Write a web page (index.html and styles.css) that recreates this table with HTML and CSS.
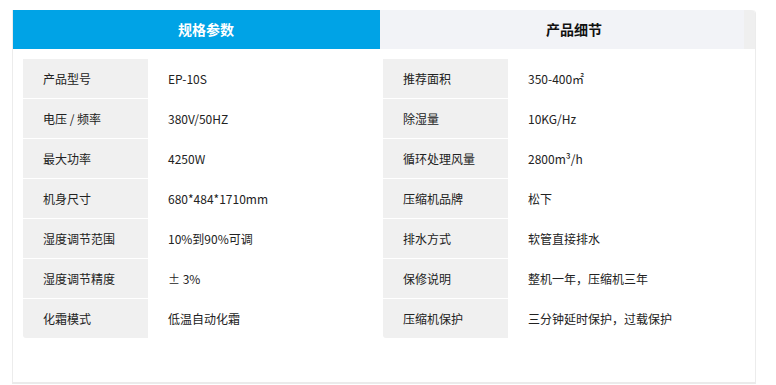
FILE: index.html
```html
<!DOCTYPE html>
<html lang="zh-CN">
<head>
<meta charset="utf-8">
<title>规格参数</title>
<link rel="stylesheet" href="styles.css">
</head>
<body>
<div class="page">
  <div class="card">
    <div class="tabs">
      <div class="tab tab-active">规格参数</div>
      <div class="tab tab-idle">产品细节</div>
    </div>
    <div class="tables">
      <div class="spec">
        <div class="row"><div class="k">产品型号</div><div class="v">EP-10S</div></div>
        <div class="row"><div class="k">电压 / 频率</div><div class="v">380V/50HZ</div></div>
        <div class="row"><div class="k">最大功率</div><div class="v">4250W</div></div>
        <div class="row"><div class="k">机身尺寸</div><div class="v">680*484*1710mm</div></div>
        <div class="row"><div class="k">湿度调节范围</div><div class="v">10%到90%可调</div></div>
        <div class="row"><div class="k">湿度调节精度</div><div class="v">± 3%</div></div>
        <div class="row"><div class="k">化霜模式</div><div class="v">低温自动化霜</div></div>
      </div>
      <div class="spec">
        <div class="row"><div class="k">推荐面积</div><div class="v">350-400㎡</div></div>
        <div class="row"><div class="k">除湿量</div><div class="v">10KG/Hz</div></div>
        <div class="row"><div class="k">循环处理风量</div><div class="v">2800m³/h</div></div>
        <div class="row"><div class="k">压缩机品牌</div><div class="v">松下</div></div>
        <div class="row"><div class="k">排水方式</div><div class="v">软管直接排水</div></div>
        <div class="row"><div class="k">保修说明</div><div class="v">整机一年，压缩机三年</div></div>
        <div class="row"><div class="k">压缩机保护</div><div class="v">三分钟延时保护，过载保护</div></div>
      </div>
    </div>
  </div>
</div>
</body>
</html>
```

FILE: styles.css
```css
html, body {
  margin: 0;
  padding: 0;
  background: #ffffff;
}

body {
  font-family: "Noto Sans CJK SC", "Noto Sans", sans-serif;
  color: #222222;
}

.page {
  padding: 10px 20px 0 12px;
}

.card {
  width: 742px;
  height: 372px;
  border: 1px solid #ececec;
  border-top: none;
  border-bottom: 2px solid #ebebeb;
  border-radius: 0 4px 0 0;
  background: #ffffff;
  box-sizing: content-box;
}

.tabs {
  display: flex;
  height: 39px;
  background: #efefef;
  border-radius: 0 4px 0 0;
}

.tab {
  height: 39px;
  line-height: 39px;
  font-size: 14px;
  font-weight: bold;
  text-align: center;
  box-sizing: border-box;
}

.tab-active {
  width: 367px;
  background: #00a3e6;
  color: #ffffff;
  padding-left: 19px;
}

.tab-idle {
  width: 364px;
  background: #f2f3f7;
  color: #111111;
  padding-left: 24px;
}

.tables {
  display: grid;
  grid-template-columns: 360px 360px;
  padding: 10px 0 0 10px;
}

.spec {
  display: flex;
  flex-direction: column;
}

.row {
  display: flex;
  height: 40px;
  border-top: 1px solid #ffffff;
  box-sizing: border-box;
  font-size: 12px;
}

.row:first-child {
  height: 39px;
  border-top: none;
}

.k {
  width: 125px;
  background: #f0f0f0;
  padding-left: 20px;
  box-sizing: border-box;
  display: flex;
  align-items: center;
}

.row:last-child .k {
  border-radius: 0 0 0 3px;
}

.v {
  flex: 1;
  padding-left: 20px;
  display: flex;
  align-items: center;
}
```
